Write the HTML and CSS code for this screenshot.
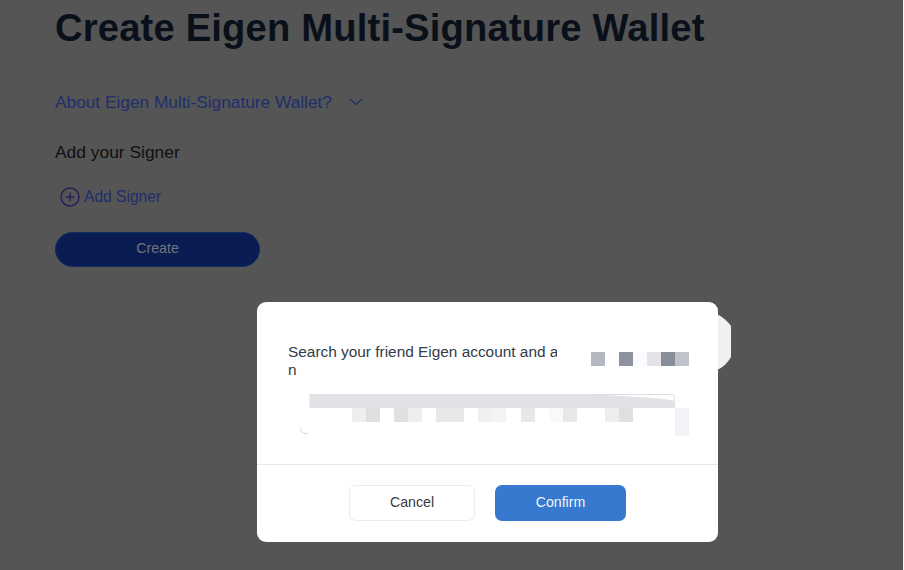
FILE: index.html
```html
<!DOCTYPE html>
<html lang="en">
<head>
<meta charset="utf-8">
<title>Create Eigen Multi-Signature Wallet</title>
<link rel="stylesheet" href="styles.css">
</head>
<body>
<main class="page">
  <h1 class="title">Create Eigen Multi-Signature Wallet</h1>
  <a class="about"><span>About Eigen Multi-Signature Wallet?</span>
    <svg class="chevron" width="14" height="8" viewBox="0 0 14 8"><path d="M1 1l6 5.7L13 1"/></svg>
  </a>
  <h2 class="subtitle">Add your Signer</h2>
  <a class="add">
    <svg class="plus" width="20" height="20" viewBox="0 0 20 20"><circle cx="10" cy="10" r="9"/><path d="M10 5.7v8.6M5.7 10h8.6"/></svg>
    <span>Add Signer</span>
  </a>
  <button class="create">Create</button>
</main>
<div class="knob"></div>
<section class="modal" role="dialog">
  <div class="modal-body">
    <p class="message"><span class="line">Search your friend Eigen account and a</span><span>n</span></p>
    <svg class="mosaic" width="461" height="162" viewBox="257 302 461 162" shape-rendering="crispEdges">
      <g>
        <path fill="#b3b7c2" d="M591 352h14v14h-14z"/>
        <path fill="#8c929e" d="M619 352h14v14h-14z"/>
        <path fill="#fafbfd" d="M633 352h14v14h-14z"/>
        <path fill="#e4e4e8" d="M647 352h14v14h-14z"/>
        <path fill="#888e99" d="M661 352h14v14h-14z"/>
        <path fill="#c1c3ca" d="M675 352h14v14h-14z"/>
      </g>
      <g shape-rendering="auto">
        <path fill="#e2e2e6" d="M309.500 394H598C622 397 655 396.500 675 401V408H309.500z"/>
        <path fill="none" stroke="#dedfe4" d="M590 394.500H672Q674.500 394.500 674.500 397V402"/>
        <path fill="none" stroke="#d5d6dd" d="M300.500 428v1.500Q301 433.500 306 433.500h1.500"/>
      </g>
      <path fill="#eeeeee" d="M352 408h14v14h-14zM408 408h14v14h-14zM605 408h14v14h-14z"/>
      <path fill="#dfdfe0" d="M366 408h14v14h-14zM394 408h14v14h-14zM619 408h14v14h-14z"/>
      <path fill="#e8e8e9" d="M436 408h28v14h-28zM521 408h14v14h-14zM563 408h14v14h-14z"/>
      <path fill="#f0f0f1" d="M478 408h14v14h-14z"/>
      <path fill="#f4f4f5" d="M492 408h14v14h-14z"/>
      <path fill="#f9f9fa" d="M549 408h14v14h-14z"/>
      <path fill="#f2f3f6" d="M675 408h14v28h-14z"/>
    </svg>
  </div>
  <footer class="modal-footer">
    <button class="btn cancel">Cancel</button>
    <button class="btn confirm">Confirm</button>
  </footer>
</section>
</body>
</html>
```
FILE: styles.css
```css
* { box-sizing: border-box; }
body {
  margin: 0;
  height: 570px;
  overflow: hidden;
  position: relative;
  background: #555;
  border-right: 1px solid #f4f4f4;
  font-family: "Liberation Sans", Arial, sans-serif;
}
.page {
  display: flex;
  flex-direction: column;
  align-items: flex-start;
  padding: 6px 0 0 55px;
}
.title {
  margin: 0;
  font-size: 38.2px;
  line-height: 44px;
  letter-spacing: 0.17px;
  white-space: nowrap;
  color: #0a1019;
}
.about {
  display: flex;
  align-items: center;
  gap: 17px;
  margin-top: 41px;
  height: 22px;
  font-size: 17.3px;
  color: #202e6c;
}
.chevron { fill: none; stroke: #202e6c; stroke-width: 1.3; }
.subtitle {
  margin: 28px 0 0;
  font-size: 17.4px;
  line-height: 22px;
  font-weight: 400;
  color: #101010;
}
.add {
  display: flex;
  align-items: center;
  gap: 4px;
  margin: 23px 0 0 5px;
  height: 21px;
  font-size: 15.6px;
  color: #202e6c;
}
.plus { fill: none; stroke: #26245a; stroke-width: 1.5; }
.create {
  width: 205px;
  height: 35px;
  margin-top: 25px;
  padding: 0 0 3px;
  border: 1px solid #0d2d63;
  border-radius: 18px;
  background: #0a1c52;
  color: #72757c;
  font: 14.2px "Liberation Sans", Arial, sans-serif;
}
.knob {
  position: absolute;
  left: 674px;
  top: 313px;
  width: 57px;
  height: 58px;
  background: #f0f0f0;
  clip-path: path("M43 1Q52 6 57 13V44Q52 53 43 57Z");
}
.modal {
  position: absolute;
  left: 257px;
  top: 302px;
  width: 461px;
  height: 240px;
  display: flex;
  flex-direction: column;
  border-radius: 9px;
  background: #fff;
}
.modal-body {
  position: relative;
  height: 163px;
  padding: 41px 31px 0;
  border-bottom: 1px solid #e8e8e9;
}
.message {
  margin: 0;
  font-size: 15.4px;
  line-height: 18px;
  color: #323c4a;
}
.message span { display: block; }
.message .line { width: 269px; overflow: hidden; white-space: nowrap; }
.mosaic { position: absolute; left: 0; top: 0; }
.modal-footer {
  display: flex;
  gap: 20px;
  padding: 20px 0 0 92px;
}
.btn {
  height: 36px;
  padding: 0 0 2px;
  border-radius: 7px;
  font: 14.2px "Liberation Sans", Arial, sans-serif;
}
.cancel {
  width: 126px;
  border: 1px solid #ececee;
  background: #fff;
  color: #3a3a3c;
}
.confirm {
  width: 131px;
  border: 0;
  background: #3679ce;
  color: #eef5fc;
}
```
